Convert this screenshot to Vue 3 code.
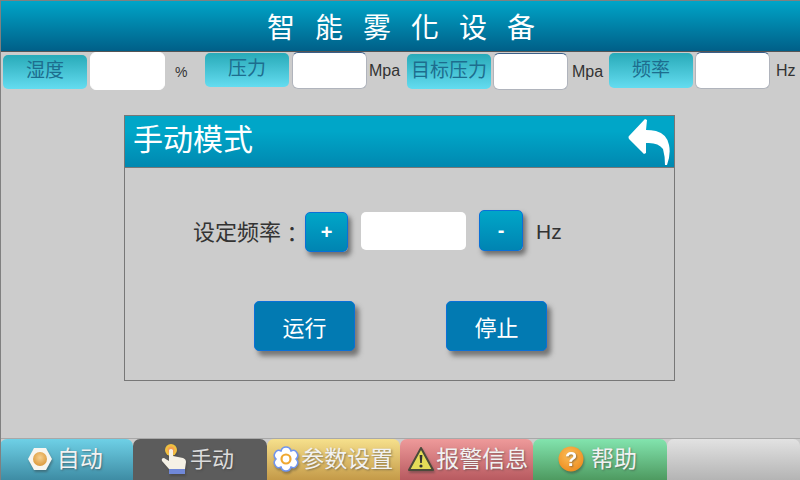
<template>
  <div class="screen">
    <header class="title">智能雾化设备</header>

    <section class="readings">
      <template v-for="item in readings" :key="item.label">
        <div class="tag" :class="item.cls">{{ item.label }}</div>
        <div class="value" :class="item.cls"></div>
        <span class="unit" :class="item.cls">{{ item.unit }}</span>
      </template>
    </section>

    <main class="body">
      <section class="panel">
        <div class="panel-head">
          <span>手动模式</span>
          <svg class="back" width="42" height="48" viewBox="0 0 42 48">
            <path d="M17 1 L1 18 Q0 19 1 21 L16 36 L18 35 L18 25 Q30 24 35 31 Q37 38 37 47 L39 47 Q43 36 41 27 Q39 16 28 13 Q23 12 18 12 L19 2 Z" fill="#fff" />
          </svg>
        </div>
        <div class="freq-row">
          <span class="freq-label">设定频率<span class="colon">：</span></span>
          <button class="step plus">+</button>
          <div class="freq-input"></div>
          <button class="step minus">-</button>
          <span class="freq-unit">Hz</span>
        </div>
        <div class="actions">
          <button class="action">运行</button>
          <button class="action">停止</button>
        </div>
      </section>
    </main>

    <nav class="tabs">
      <div class="tab auto">
        <svg width="26" height="24" viewBox="0 0 26 24">
          <defs>
            <radialGradient id="egg" cx="50%" cy="40%" r="60%">
              <stop offset="0" stop-color="#f6d090" />
              <stop offset="1" stop-color="#dc9a3c" />
            </radialGradient>
          </defs>
          <path d="M7 1 H19 L25 12 L19 23 H7 L1 12 Z" fill="#f8f6f0" />
          <circle cx="13" cy="12" r="7" fill="url(#egg)" />
        </svg>
        <span>自动</span>
      </div>
      <div class="tab manual">
        <svg width="28" height="32" viewBox="0 0 28 32">
          <circle cx="11" cy="7" r="6" fill="#f0c040" />
          <circle cx="11" cy="7" r="3.5" fill="#f5a050" />
          <path d="M9 7 Q11 5 13 7 L13 13 L23 15 Q26 16 26 19 L25 26 L9 26 L2 18 Q1 15 4 15 L9 18 Z" fill="#f5f1e6" />
          <rect x="9" y="26" width="16" height="5" fill="#7088d8" />
        </svg>
        <span>手动</span>
      </div>
      <div class="tab params">
        <svg width="26" height="26" viewBox="0 0 26 26">
          <path d="M13 1 Q17 1 18 5 Q22 3 24 7 Q26 10 23 13 Q26 16 24 19 Q22 23 18 21 Q17 25 13 25 Q9 25 8 21 Q4 23 2 19 Q0 16 3 13 Q0 10 2 7 Q4 3 8 5 Q9 1 13 1 Z" fill="#fff" stroke="#6f94f0" stroke-width="1.5" />
          <circle cx="13" cy="13" r="4.5" fill="none" stroke="#f0a830" stroke-width="2.2" />
        </svg>
        <span>参数设置</span>
      </div>
      <div class="tab alarm">
        <svg width="28" height="26" viewBox="0 0 28 26">
          <path d="M14 2 L26 24 H2 Z" fill="#e4dc58" stroke="#4a4a3a" stroke-width="2" stroke-linejoin="round" />
          <path d="M12.6 9 H15.4 L14.8 17 H13.2 Z" fill="#333" />
          <circle cx="14" cy="20" r="1.6" fill="#333" />
        </svg>
        <span>报警信息</span>
      </div>
      <div class="tab help">
        <svg width="26" height="26" viewBox="0 0 26 26">
          <defs>
            <radialGradient id="orb" cx="45%" cy="35%" r="70%">
              <stop offset="0" stop-color="#fbbf5a" />
              <stop offset="1" stop-color="#ee8a1c" />
            </radialGradient>
          </defs>
          <circle cx="13" cy="13" r="12.5" fill="url(#orb)" />
          <text x="13" y="20" text-anchor="middle" class="qmark">?</text>
        </svg>
        <span>帮助</span>
      </div>
      <div class="tab blank"></div>
    </nav>
  </div>
</template>

<script setup>
const readings = [
  { label: '湿度', unit: '%', cls: 'r-humidity' },
  { label: '压力', unit: 'Mpa', cls: 'r-pressure' },
  { label: '目标压力', unit: 'Mpa', cls: 'r-target' },
  { label: '频率', unit: 'Hz', cls: 'r-freq' }
]
</script>

<style>
html,
body {
  margin: 0;
  background: #ccc;
}
</style>

<style scoped>
.screen {
  width: 800px;
  height: 480px;
  box-sizing: border-box;
  display: flex;
  flex-direction: column;
  overflow: hidden;
  background: #ccc;
  border-left: 1px solid #808080;
  border-top: 1px solid #808080;
  font-family: "Liberation Sans", "Noto Sans CJK SC", sans-serif;
}

.title {
  height: 50px;
  flex: none;
  display: flex;
  align-items: center;
  justify-content: center;
  background: linear-gradient(#00a5c8, #005f88);
  border-bottom: 1px solid #555;
  color: #fff;
  font-family: "Noto Sans CJK TC", sans-serif;
  font-weight: 400;
  font-size: 28px;
  letter-spacing: 20px;
  padding-left: 22px;
  margin-left: -1px;
}

.readings {
  height: 39px;
  flex: none;
  display: flex;
  align-items: flex-start;
}

.tag {
  width: 84px;
  height: 34px;
  flex: none;
  border-radius: 5px;
  background: linear-gradient(#28aab8, #64dcf0);
  color: #1d6d8e;
  font-size: 19px;
  line-height: 32px;
  text-align: center;
}

.value {
  width: 75px;
  height: 37px;
  flex: none;
  box-sizing: border-box;
  background: #fff;
  border-radius: 6px;
  border: 1px solid #b0b4bc;
  border-top-color: #3a5f88;
}

.unit {
  font-size: 16px;
  color: #333;
  line-height: 38px;
  flex: none;
}

.tag.r-humidity {
  margin: 3px 0 0 2px;
}
.value.r-humidity {
  margin: 0 0 0 3px;
  height: 38px;
  border-color: #fff;
}
.unit.r-humidity {
  width: 30px;
  margin-left: 10px;
  margin-top: 1px;
  font-size: 14px;
}
.tag.r-pressure {
  margin: 1px 0 0 0;
}
.value.r-pressure {
  margin-left: 3px;
}
.unit.r-pressure {
  width: 38px;
  margin-left: 2px;
}
.tag.r-target {
  margin: 2px 0 0 0;
  height: 35px;
  line-height: 34px;
}
.value.r-target {
  margin: 1px 0 0 2px;
}
.unit.r-target {
  width: 37px;
  margin-left: 4px;
  margin-top: 1px;
}
.tag.r-freq {
  margin: 1px 0 0 0;
  height: 35px;
  line-height: 34px;
}
.value.r-freq {
  margin-left: 2px;
}
.unit.r-freq {
  margin-left: 6px;
}

.body {
  flex: 1;
  padding: 24px 0 0 123px;
}

.panel {
  width: 551px;
  height: 266px;
  box-sizing: border-box;
  border: 1px solid #777;
}

.panel-head {
  height: 52px;
  box-sizing: border-box;
  position: relative;
  padding-left: 8px;
  background: linear-gradient(#00a6c8 30%, #0088b0);
  border-bottom: 1px solid #777;
  color: #fff;
  font-size: 30px;
  line-height: 48px;
}

.back {
  position: absolute;
  right: 4px;
  top: 2px;
}

.freq-row {
  display: flex;
  align-items: flex-start;
  height: 44px;
  margin-top: 42px;
  padding-left: 68px;
}

.freq-label {
  width: 112px;
  margin-top: 2px;
  color: #333;
  font-size: 22px;
  line-height: 40px;
  white-space: nowrap;
}

.colon {
  font-family: "Noto Sans CJK TC", sans-serif;
  vertical-align: -2px;
}

.step {
  box-sizing: border-box;
  padding: 0;
  color: #fff;
  font-family: inherit;
  font-weight: 700;
  font-size: 20px;
  background: linear-gradient(#00a6c8, #0084b2);
  border: 1px solid #0a70d8;
  border-radius: 5px;
  box-shadow: 3px 4px 5px rgba(60, 60, 60, 0.65);
}

.plus {
  width: 43px;
  height: 40px;
  margin-top: 2px;
}

.minus {
  width: 44px;
  height: 41px;
  margin-left: 13px;
}

.freq-input {
  width: 105px;
  height: 38px;
  margin: 2px 0 0 13px;
  background: #fff;
  border-radius: 5px;
}

.freq-unit {
  margin-left: 13px;
  color: #333;
  font-size: 21px;
  line-height: 44px;
}

.actions {
  display: flex;
  gap: 91px;
  margin-top: 47px;
  padding-left: 129px;
}

.action {
  width: 101px;
  height: 50px;
  box-sizing: border-box;
  padding: 0;
  color: #fff;
  font-family: inherit;
  font-size: 22px;
  background: #027ab2;
  border: 1px solid #0a70d8;
  border-radius: 5px;
  box-shadow: 4px 5px 5px rgba(70, 70, 70, 0.65);
}

.tabs {
  height: 41px;
  flex: none;
  margin-left: -1px;
  border-top: 1px solid #a8a8a8;
  display: grid;
  grid-template-columns: repeat(6, 1fr);
}

.tab {
  box-sizing: border-box;
  display: flex;
  align-items: center;
  justify-content: center;
  gap: 4px;
  padding: 0 4px 2px 0;
  border-radius: 7px 7px 0 0;
  color: #f2f2f2;
  font-size: 23px;
  text-shadow: 1px 1px 2px rgba(60, 60, 60, 0.55);
}

.tab span {
  margin-bottom: 4px;
}

.tab svg {
  flex: none;
  filter: drop-shadow(1px 2px 1px rgba(50, 50, 50, 0.4));
}

.auto {
  background: linear-gradient(#6ed0e6, #3e8ca4);
}
.manual {
  background: #5c5c5c;
  color: #dcdcdc;
  font-size: 22px;
  padding-right: 6px;
  gap: 2px;
}
.params {
  background: linear-gradient(#f6e08c, #c49a48);
  gap: 2px;
  padding-right: 0;
}
.alarm {
  background: linear-gradient(#ee9a9a, #b85a60);
  gap: 1px;
  padding: 0 0 2px 2px;
}
.help {
  background: linear-gradient(#82e4ae, #4e9a60);
  gap: 7px;
  padding-right: 5px;
}
.blank {
  background: linear-gradient(#e2e2e2, #b4b4b4);
}

.qmark {
  fill: #fff;
  font-family: "Liberation Sans", sans-serif;
  font-weight: 700;
  font-size: 20px;
}
</style>
